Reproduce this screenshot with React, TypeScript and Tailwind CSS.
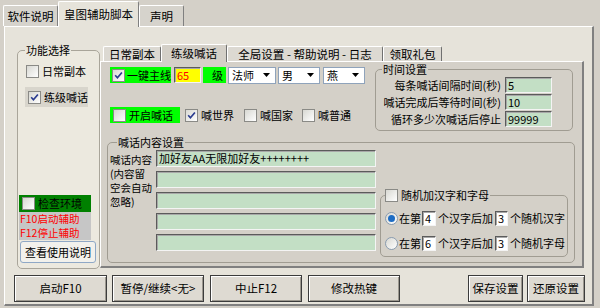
import React from 'react';

const FONT = "font-['Noto_Sans_CJK_SC','Noto_Sans',sans-serif]";
const sunken =
  'border border-t-[#5b5b5b] border-l-[#5b5b5b] border-r-[#f4f4f4] border-b-[#f4f4f4] shadow-[inset_1px_1px_0_#a8a8a8]';
const classicBtn =
  'flex items-center justify-center border border-[#3c3c3c] bg-[#dedad2] shadow-[inset_1px_1px_0_#ffffff,inset_-1px_-1px_0_#9c988f]';

function Check({ checked = false }: { checked?: boolean }) {
  return (
    <span className="flex h-[13px] w-[13px] shrink-0 items-center justify-center border border-[#8a8a86] bg-linear-to-br from-[#d8d8d2] to-white">
      {checked && (
        <svg width="9" height="9" viewBox="0 0 9 9">
          <path d="M1.2 4.3 3.4 6.7 7.9 1.5" fill="none" stroke="#2a3b8f" strokeWidth="1.7" />
        </svg>
      )}
    </span>
  );
}

function Radio({ checked = false }: { checked?: boolean }) {
  return (
    <span className="flex h-[13px] w-[13px] shrink-0 items-center justify-center rounded-full border border-[#8a9cb0] bg-linear-to-br from-[#d8d8d2] to-white">
      {checked && <span className="h-[7px] w-[7px] rounded-full bg-[#1d6cc4]" />}
    </span>
  );
}

function Select({ value, className }: { value: string; className: string }) {
  return (
    <div className={`flex h-[17px] items-center border border-[#8fa3bb] bg-white pl-[3px] ${className}`}>
      <span className="flex-1">{value}</span>
      <svg className="mr-[5px]" width="7" height="4" viewBox="0 0 7 4">
        <path d="M0 0h7L3.5 4z" fill="#000" />
      </svg>
    </div>
  );
}

function OuterTab({ label, active = false, w }: { label: string; active?: boolean; w: string }) {
  return (
    <div
      className={`flex items-center justify-center whitespace-nowrap rounded-t-[2px] border-l border-t border-r border-l-white border-t-white border-r-[#808080] text-[11.5px] ${w} ${
        active ? 'relative z-10 -mb-px h-[26px] bg-[#e6e3da]' : 'h-[21px] bg-[#d6d3cc]'
      }`}
    >
      {label}
    </div>
  );
}

function InnerTab({ label, active = false, w }: { label: string; active?: boolean; w: string }) {
  return (
    <div
      className={`flex items-center justify-center whitespace-nowrap rounded-t-[2px] border-l border-t border-r border-l-white border-t-white border-r-[#707070] text-[11.5px] ${w} ${
        active ? 'relative z-10 -mb-px h-[18px] bg-[#d4d0c8]' : 'h-[15px] bg-[#dcd9d2]'
      }`}
    >
      {label}
    </div>
  );
}

const timeRows = [
  { label: '每条喊话间隔时间(秒)', value: '5' },
  { label: '喊话完成后等待时间(秒)', value: '10' },
  { label: '循环多少次喊话后停止', value: '99999' },
];

const contentInputs = ['加好友AA无限加好友++++++++', '', '', '', ''];

const hintLines = ['喊话内容', '(内容留', '空会自动', '忽略)'];

function RandomRow({ checked, a, b, tail }: { checked?: boolean; a: string; b: string; tail: string }) {
  return (
    <div className="flex h-[15px] items-center whitespace-nowrap">
      <Radio checked={checked} />
      <span className="ml-[1px]">在第</span>
      <span className={`ml-[1px] flex h-[15px] w-[14px] items-center bg-white pl-[2px] ${sunken}`}>{a}</span>
      <span className="ml-[2px]">个汉字后加</span>
      <span className={`ml-[2px] flex h-[15px] w-[13px] items-center bg-white pl-[2px] ${sunken}`}>{b}</span>
      <span className="ml-[2px]">{tail}</span>
    </div>
  );
}

export default function App() {
  return (
    <div className={`h-[308px] w-[600px] overflow-hidden bg-[#d4d0c8] text-[11px] leading-[13px] text-black ${FONT}`}>
      {/* outer tab strip */}
      <div className="flex h-[26px] items-end pl-[3px]">
        <OuterTab label="软件说明" w="w-[55px]" />
        <OuterTab label="皇图辅助脚本" w="w-[81px]" active />
        <OuterTab label="声明" w="w-[45px]" />
      </div>

      {/* outer panel */}
      <div className="ml-[4px] h-[280px] w-[590px] border-b-2 border-l border-r-2 border-t border-b-[#808080] border-l-white border-r-[#808080] border-t-white bg-[#e6e3da]">
        <div className="flex items-start pt-[16px]">
          {/* left group */}
          <fieldset className="ml-[12px] h-[226px] w-[83px] rounded-[5px] border border-[#a9a59a] bg-[#ece9df]">
            <legend className="ml-[7px] px-[1px] leading-[14px]">功能选择</legend>
            <div className="flex flex-col whitespace-nowrap">
              <div className="ml-[8px] mt-[6px] flex h-[17px] items-center gap-[3px]">
                <Check />
                日常副本
              </div>
              <div className="ml-[7px] mt-[7px] flex h-[20px] w-[63px] items-center gap-[3px] bg-[#d8d5cc] pl-[3px]">
                <Check checked />
                练级喊话
              </div>
              <div className="ml-[1px] mt-[88px] flex h-[17px] w-[72px] items-center gap-[3px] bg-[#008000] pl-[3px]">
                <Check />
                检查环境
              </div>
              <div className="ml-[1px] flex w-[72px] flex-col bg-[#c6c6c6] pl-px text-[10.5px] text-[#ff0000]">
                <span className="h-[14px] leading-[14px]">F10启动辅助</span>
                <span className="h-[14px] leading-[14px]">F12停止辅助</span>
              </div>
              <button className="ml-[2px] mt-[1px] flex h-[22px] w-[76px] items-center justify-center rounded-[3px] border border-[#8fa8c6] bg-[#f2f1ec]">
                查看使用说明
              </button>
            </div>
          </fieldset>

          {/* inner tab control */}
          <div className="mt-px w-[484px]">
            <div className="flex h-[17px] items-end pl-[3px]">
              <InnerTab label="日常副本" w="w-[58px]" />
              <InnerTab label="练级喊话" w="w-[66px]" active />
              <InnerTab label="全局设置 - 帮助说明 - 日志" w="w-[156px]" />
              <InnerTab label="领取礼包" w="w-[59px]" />
            </div>
            <div className="h-[207px] border-b-2 border-l border-r-2 border-t border-b-[#808080] border-l-white border-r-[#808080] border-t-white bg-[#d4d0c8]">
              <div className="flex items-start">
                <div className="w-[274px] whitespace-nowrap pl-[9px] pt-[5px]">
                  <div className="flex h-[16px] items-center">
                    <div className="flex h-[16px] w-[61px] items-center gap-[2px] bg-[#00ff00] pl-[2px]">
                      <Check checked />
                      一键主线
                    </div>
                    <div className={`ml-[3px] flex h-[16px] w-[27px] items-center bg-[#ffff00] pl-[2px] text-[#ff0000] ${sunken}`}>
                      65
                    </div>
                    <div className="ml-[2px] flex h-[16px] w-[23px] items-center justify-end bg-[#00ff00] pr-[3px]">级</div>
                    <Select value="法师" className="ml-[2px] w-[48px]" />
                    <Select value="男" className="ml-[2px] w-[42px]" />
                    <Select value="燕" className="ml-[3px] w-[42px]" />
                  </div>
                  <div className="mt-[24px] flex h-[16px] items-center">
                    <div className="flex h-[16px] w-[70px] items-center gap-[3px] bg-[#00ff00] pl-[3px]">
                      <Check />
                      开启喊话
                    </div>
                    <div className="ml-[5px] flex items-center gap-[3px]">
                      <Check checked />
                      喊世界
                    </div>
                    <div className="ml-[10px] flex items-center gap-[3px]">
                      <Check />
                      喊国家
                    </div>
                    <div className="ml-[9px] flex items-center gap-[3px]">
                      <Check />
                      喊普通
                    </div>
                  </div>
                </div>

                {/* time settings */}
                <fieldset className="mt-px h-[68px] w-[198px] rounded-[5px] border border-[#a09c92]">
                  <legend className="ml-[6px] px-px leading-[12px]">时间设置</legend>
                  <div className="mt-[2px] flex flex-col gap-px whitespace-nowrap">
                    {timeRows.map((r) => (
                      <div key={r.label} className="flex h-[16px] items-center justify-end pr-[20px]">
                        <span className="mr-[4px]">{r.label}</span>
                        <span className={`flex h-[16px] w-[47px] items-center bg-[#c3dfc5] pl-[2px] ${sunken}`}>{r.value}</span>
                      </div>
                    ))}
                  </div>
                </fieldset>
              </div>

              {/* chat content group */}
              <fieldset className="ml-[6px] mt-[4px] h-[128px] w-[468px] rounded-[5px] border border-[#a09c92]">
                <legend className="ml-[9px] px-px leading-[14px]">喊话内容设置</legend>
                <div className="flex items-start">
                  <div className="mt-[4px] flex w-[48px] flex-col whitespace-nowrap pl-[2px] text-[10.5px]">
                    {hintLines.map((l) => (
                      <span key={l} className="h-[14px] leading-[14px]">
                        {l}
                      </span>
                    ))}
                  </div>
                  <div className="mt-px flex w-[220px] flex-col gap-[4px]">
                    {contentInputs.map((t, i) => (
                      <div key={i} className={`flex h-[17px] items-center whitespace-nowrap bg-[#c3dfc5] pl-[2px] ${sunken}`}>
                        {t}
                      </div>
                    ))}
                  </div>
                  <fieldset className="ml-[4px] mt-[39px] h-[69px] w-[188px] rounded-[5px] border border-[#a09c92]">
                    <legend className="ml-[4px] flex items-center gap-[3px] whitespace-nowrap pr-px leading-[14px]">
                      <Check />
                      随机加汉字和字母
                    </legend>
                    <div className="flex flex-col pl-[4px]">
                      <div className="mt-[9px]">
                        <RandomRow checked a="4" b="3" tail="个随机汉字" />
                      </div>
                      <div className="mt-[10px]">
                        <RandomRow a="6" b="3" tail="个随机字母" />
                      </div>
                    </div>
                  </fieldset>
                </div>
              </fieldset>
            </div>
          </div>
        </div>

        {/* bottom buttons */}
        <div className="mt-[6px] flex h-[27px] whitespace-nowrap pl-[9px] text-[11.5px]">
          <div className={`w-[93px] ${classicBtn}`}>启动F10</div>
          <div className={`ml-[5px] w-[92px] ${classicBtn}`}>暂停/继续&lt;无&gt;</div>
          <div className={`ml-[6px] w-[92px] ${classicBtn}`}>中止F12</div>
          <div className={`ml-[6px] w-[92px] ${classicBtn}`}>修改热键</div>
          <div className={`ml-[68px] w-[55px] ${classicBtn}`}>保存设置</div>
          <div className={`ml-[4px] w-[58px] ${classicBtn}`}>还原设置</div>
        </div>
      </div>
    </div>
  );
}
